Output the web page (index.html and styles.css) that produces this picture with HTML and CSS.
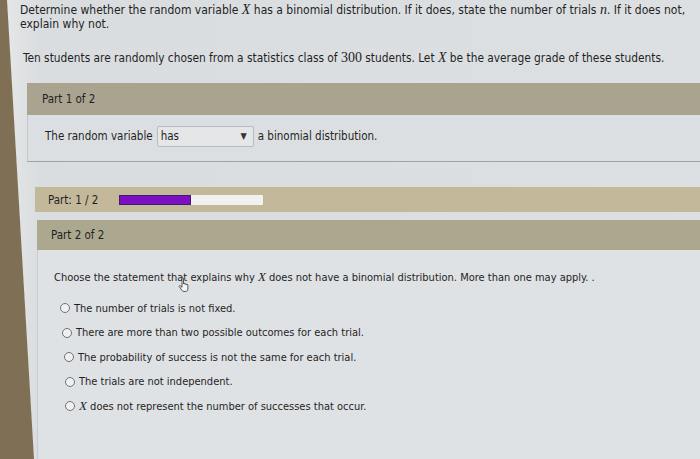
FILE: index.html
```html
<!DOCTYPE html>
<html>
<head>
<meta charset="utf-8">
<link rel="stylesheet" href="styles.css">
</head>
<body>
<div class="screen">
  <div class="intro">
    <p class="q">Determine whether the random variable <i class="var">X</i> has a binomial distribution. If it does, state the number of trials <i class="var">n</i>. If it does not,<br>explain why not.</p>
    <p class="q2">Ten students are randomly chosen from a statistics class of <span class="num">300</span> students. Let <i class="var">X</i> be the average grade of these students.</p>
  </div>

  <section class="part part-1">
    <div class="part-head">Part 1 of 2</div>
    <div class="part-body">
      <span>The random variable</span>
      <span class="select"><span>has</span><span class="arrow">▼</span></span>
      <span>a binomial distribution.</span>
    </div>
  </section>

  <div class="progress-row">
    <span>Part: 1 / 2</span>
    <div class="progress"><div class="fill" style="width:50%"></div></div>
  </div>

  <section class="part part-2">
    <div class="part-head">Part 2 of 2</div>
    <div class="part-body">
      <p class="prompt">Choose the statement that explains why <i class="var">X</i> does not have a binomial distribution. More than one may apply. .</p>
      <ul class="options">
        <li class="opt o1"><span class="radio"></span><span>The number of trials is not fixed.</span></li>
        <li class="opt o2"><span class="radio"></span><span>There are more than two possible outcomes for each trial.</span></li>
        <li class="opt o3"><span class="radio"></span><span>The probability of success is not the same for each trial.</span></li>
        <li class="opt o4"><span class="radio"></span><span>The trials are not independent.</span></li>
        <li class="opt o5"><span class="radio"></span><span><i class="var">X</i> does not represent the number of successes that occur.</span></li>
      </ul>
      <svg class="cursor" width="12" height="16" viewBox="0 0 12 16"><path d="M4 1.5c0-.8 1.5-.8 1.5 0V7l.2-.2c0-.7 1.4-.7 1.4 0v.6c0-.7 1.4-.7 1.4 0v.6c0-.7 1.4-.7 1.4 0V12c0 1.5-1 2.5-2.5 2.5H6c-1 0-1.6-.5-2.2-1.3L1.3 9.6c-.4-.7.4-1.3 1-.8L4 10.3z" fill="#f4f4f4" stroke="#333" stroke-width="0.8"/></svg>
    </div>
  </section>
</div>
</body>
</html>
```

FILE: styles.css
```css
html, body {
  margin: 0;
  padding: 0;
}

body {
  width: 700px;
  height: 459px;
  overflow: hidden;
  background: #7f6f55;
  font-family: "DejaVu Sans Condensed", "DejaVu Sans", sans-serif;
  font-size: 12px;
  color: #1f1f24;
}

.screen {
  height: 459px;
  overflow: hidden;
  box-sizing: border-box;
  padding-left: 20px;
  background: linear-gradient(90deg, #e6e8e9 0px, #dadddf 40px, #dde0e2 100%);
  clip-path: polygon(7px 0, 100% 0, 100% 100%, 34px 100%);
}

.var {
  font-family: "Liberation Serif", serif;
  font-style: italic;
  font-size: 14px;
}

.num {
  font-family: "Liberation Serif", serif;
  font-size: 14px;
}

.intro p {
  margin: 0;
  line-height: 14px;
}

.q {
  padding-top: 3px;
}

.intro .q2 {
  margin: 20px 0 0 3px;
  font-size: 11.8px;
}

.part {
  display: flex;
  flex-direction: column;
}

.part-head {
  display: flex;
  align-items: center;
  background: #aaa38f;
  font-size: 11.5px;
}

.part-1 {
  margin: 18px 0 0 7px;
  font-size: 11.5px;
}

.part-1 .part-head {
  height: 32px;
  padding-left: 15px;
}

.part-1 .part-body {
  display: flex;
  align-items: center;
  gap: 4px;
  height: 47px;
  padding: 0 0 4px 17px;
  box-sizing: border-box;
  background: #dcdfe1;
  border-left: 1px solid #c3c6c8;
  border-bottom: 1px solid #9ea2a4;
}

.select {
  display: flex;
  align-items: center;
  justify-content: space-between;
  width: 97px;
  height: 21px;
  box-sizing: border-box;
  padding: 0 6px 0 3px;
  background: #e4e6e7;
  border: 1px solid #b8bbbd;
  border-radius: 2px;
}

.arrow {
  font-size: 9px;
  color: #333;
}

.progress-row {
  display: flex;
  align-items: center;
  gap: 21px;
  height: 25px;
  margin: 25px 0 0 15px;
  padding-left: 13px;
  background: #c4b89b;
  font-size: 11.5px;
}

.progress {
  width: 144px;
  height: 10px;
  background: #f1f1ef;
  border-radius: 1px;
}

.fill {
  height: 100%;
  background: #7c0fc4;
  box-shadow: inset 0 0 0 1px #4a1a6a;
}

.part-2 {
  margin: 8px 0 0 17px;
  font-size: 11px;
}

.part-2 .part-head {
  height: 30px;
  padding-left: 14px;
  background: #aca890;
}

.part-2 .part-body {
  position: relative;
  height: 230px;
  padding-left: 16px;
  border-left: 1px solid #c9ccce;
  background: #dfe2e4;
}

.part-2 .var {
  font-size: 13px;
}

.prompt {
  margin: 20px 0 0 0;
  line-height: 14px;
}

.options {
  list-style: none;
  margin: 16px 0 0 0;
  padding: 0 0 0 6px;
  display: flex;
  flex-direction: column;
  gap: 10.5px;
}

.opt {
  display: flex;
  align-items: center;
  gap: 4px;
  height: 14px;
}

.o2 { margin-left: 2px; }
.o3 { margin-left: 4px; }
.o4 { margin-left: 5px; }
.o5 { margin-left: 5px; }

.radio {
  width: 8px;
  height: 8px;
  border: 1px solid #6f7377;
  border-radius: 50%;
  background: #eef0f1;
}

.cursor {
  position: absolute;
  left: 140px;
  top: 27px;
}
```
